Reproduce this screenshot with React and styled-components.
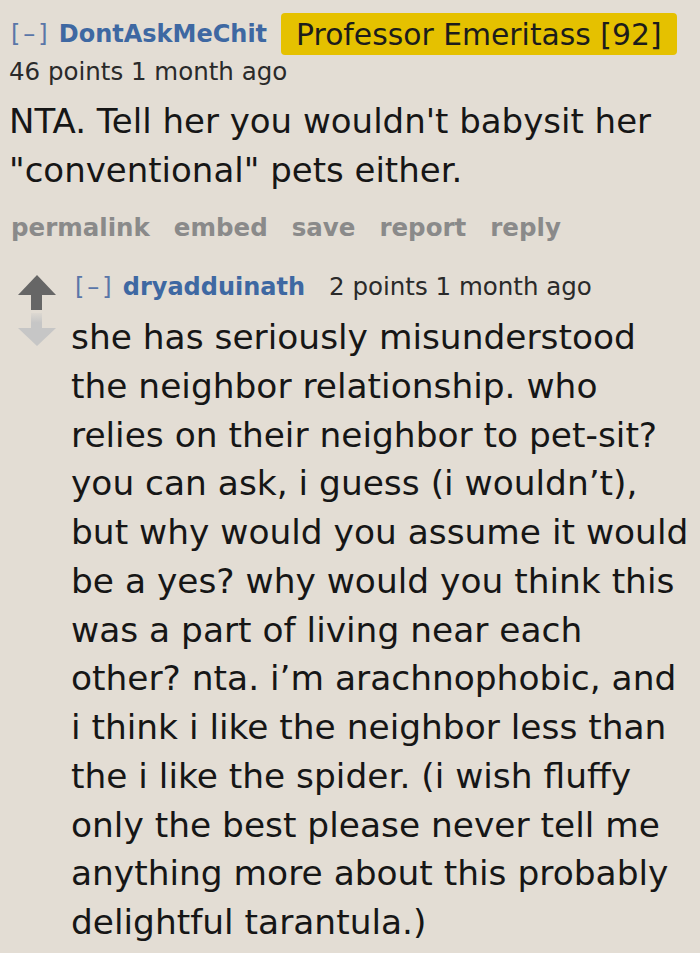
import React from "react";
import styled, { createGlobalStyle } from "styled-components";

const Global = createGlobalStyle`
  html, body { margin: 0; padding: 0; background: #e3ddd4; }
  body { font-family: "DejaVu Sans", Verdana, sans-serif; }
`;

const Page = styled.div`
  width: 700px;
  height: 953px;
  box-sizing: border-box;
  padding: 13px 0 0 9px;
  background: #e3ddd4;
  overflow: hidden;
`;

const Tagline = styled.div`
  display: flex;
  align-items: center;
  height: 42px;
`;

const Toggle = styled.span`
  font-size: 24px;
  letter-spacing: 3px;
  color: #5a76a8;
  margin-left: ${(p) => p.$left}px;
  margin-right: 8px;
`;

const Author = styled.span`
  font-size: 24px;
  font-weight: bold;
  color: #3e68a2;
`;

const Flair = styled.span`
  margin-left: 14px;
  background: #e5c100;
  color: #1c1c1c;
  font-size: 29.8px;
  height: 42px;
  padding: 0 15px 0 15px;
  border-radius: 4px;
  display: inline-flex;
  align-items: center;
`;

const Meta = styled.div`
  font-size: 24.5px;
  color: #2a2a2a;
  margin-top: 2px;
`;

const Body = styled.div`
  font-size: ${(p) => p.$size}px;
  line-height: ${(p) => p.$lh}px;
  color: #161616;
  margin-top: ${(p) => p.$top}px;
`;

const Line = styled.div`
  white-space: nowrap;
`;

const Actions = styled.ul`
  list-style: none;
  display: flex;
  gap: 24px;
  margin: 18px 0 0 2px;
  padding: 0;
`;

const Action = styled.li`
  font-size: 24.5px;
  font-weight: bold;
  color: #8a8a8a;
`;

const Child = styled.div`
  display: flex;
  margin-top: 30px;
  margin-left: 9px;
`;

const Votes = styled.div`
  display: flex;
  flex-direction: column;
  gap: 3px;
  width: 38px;
  margin-top: 3px;
  margin-right: 15px;
`;

const Entry = styled.div`
  display: flex;
  flex-direction: column;
`;

const Header = styled.div`
  display: flex;
  align-items: baseline;
`;

const Points = styled.span`
  font-size: 24.5px;
  color: #2a2a2a;
  margin-left: 24px;
`;

const UpArrow = () => (
  <svg width="38" height="35" viewBox="0 0 38 35">
    <polygon points="19,0 38,20 0,20" fill="#666666" />
    <rect x="13" y="19" width="11" height="16" fill="#666666" />
  </svg>
);

const DownArrow = () => (
  <svg width="38" height="33" viewBox="0 0 38 33">
    <defs>
      <linearGradient id="fade" x1="0" y1="0" x2="0" y2="1">
        <stop offset="0" stopColor="#c6c6c6" stopOpacity="0.2" />
        <stop offset="0.6" stopColor="#c6c6c6" stopOpacity="1" />
      </linearGradient>
    </defs>
    <rect x="13" y="0" width="11" height="16" fill="url(#fade)" />
    <polygon points="0,15 38,15 19,33" fill="#c6c6c6" />
  </svg>
);

const childLines = [
  "she has seriously misunderstood",
  "the neighbor relationship. who",
  "relies on their neighbor to pet-sit?",
  "you can ask, i guess (i wouldn\u2019t),",
  "but why would you assume it would",
  "be a yes? why would you think this",
  "was a part of living near each",
  "other? nta. i\u2019m arachnophobic, and",
  "i think i like the neighbor less than",
  "the i like the spider. (i wish fluffy",
  "only the best please never tell me",
  "anything more about this probably",
  "delightful tarantula.)",
];

export default function App() {
  return (
    <Page>
      <Global />
      <Tagline>
        <Toggle $left={2}>[–]</Toggle>
        <Author>DontAskMeChit</Author>
        <Flair>Professor Emeritass [92]</Flair>
      </Tagline>
      <Meta>46 points 1 month ago</Meta>
      <Body $size={34} $lh={49} $top={11}>
        <Line>NTA. Tell her you wouldn't babysit her</Line>
        <Line>"conventional" pets either.</Line>
      </Body>
      <Actions>
        <Action>permalink</Action>
        <Action>embed</Action>
        <Action>save</Action>
        <Action>report</Action>
        <Action>reply</Action>
      </Actions>
      <Child>
        <Votes>
          <UpArrow />
          <DownArrow />
        </Votes>
        <Entry>
          <Header>
            <Toggle $left={4}>[–]</Toggle>
            <Author>dryadduinath</Author>
            <Points>2 points 1 month ago</Points>
          </Header>
          <Body $size={34.4} $lh={48.75} $top={12}>
            {childLines.map((l) => (
              <Line key={l}>{l}</Line>
            ))}
          </Body>
        </Entry>
      </Child>
    </Page>
  );
}
